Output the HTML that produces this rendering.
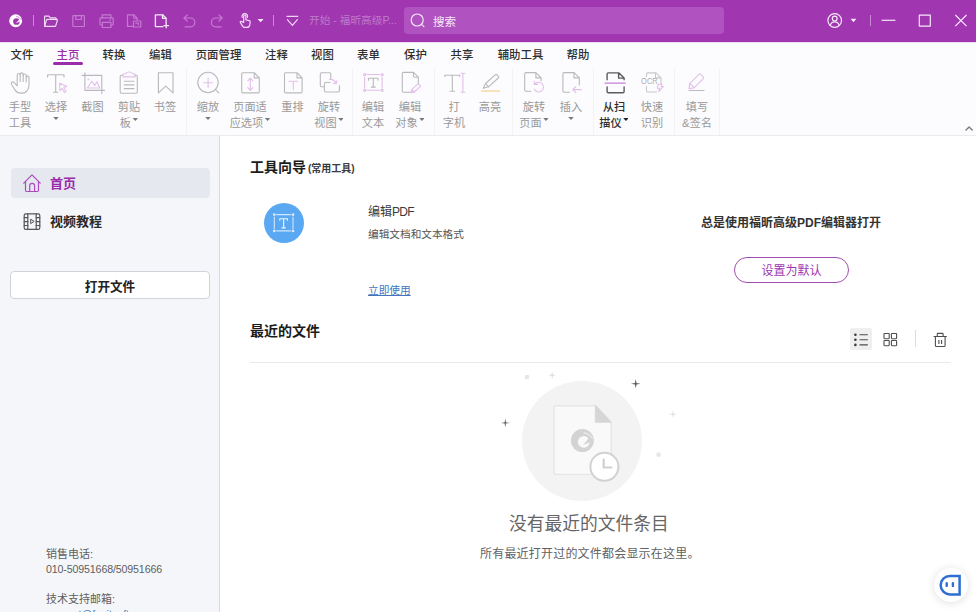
<!DOCTYPE html>
<html lang="zh-CN">
<head>
<meta charset="utf-8">
<title>开始 - 福昕高级PDF编辑器</title>
<style>
*{box-sizing:border-box;margin:0;padding:0}
html,body{width:976px;height:612px;overflow:hidden;background:#fff}
body{font-family:"Liberation Sans","Noto Sans CJK SC",sans-serif;font-size:12px;color:#333;position:relative}
.abs{position:absolute}
svg{position:absolute;overflow:visible}
/* title bar */
#titlebar{position:absolute;left:0;top:0;width:976px;height:42px;background:#a136b1}
#titlebar .sep{position:absolute;top:15px;width:1px;height:11px;background:#c98ad4}
#doctitle{position:absolute;left:309px;top:12px;font-size:10.67px;line-height:16px;color:#bd7bc9;white-space:nowrap}
#search{position:absolute;left:404px;top:7px;width:320px;height:27px;background:#b053c0;border-radius:4px}
#search span{position:absolute;left:29px;top:6.5px;font-size:11.5px;line-height:17px;color:#f7e8f9}
/* menu */
#ribbon{position:absolute;left:0;top:42px;width:976px;height:94px;background:#fcfcfe;border-bottom:1px solid #ebebee;box-shadow:inset 0 1px 0 #efdaf3}
.tab{position:absolute;top:4px;height:18px;line-height:18px;font-size:11.4px;font-weight:500;color:#2e2e2e;transform:translateX(-50%);white-space:nowrap}
.tab.on{color:#9a2cab}
#tabline{position:absolute;left:53px;top:20px;width:30px;height:3px;border-radius:2px;background:#9a2cab}
.tool{position:absolute;top:57px;transform:translateX(-50%);text-align:center;font-size:11.2px;line-height:16px;color:#999;white-space:nowrap}
.tool.act{color:#2e2e2e;font-weight:500}
.tool.act i{background:#222}
.tool i{display:inline-block;width:5.6px;height:3px;background:#787878;clip-path:polygon(0 0,100% 0,50% 100%);vertical-align:baseline;position:relative;top:-6px;margin-left:1.500px;line-height:0}
.tool b{display:block;width:5.6px;height:3px;background:#787878;clip-path:polygon(0 0,100% 0,50% 100%);margin:2px auto 0}
.rsep{position:absolute;top:26px;width:1px;height:67px;background:#f3f3f6}
/* sidebar */
#side{position:absolute;left:0;top:136px;width:220px;height:476px;background:#f5f6fa;border-right:1px solid #d9dbea}
#navhome{position:absolute;left:11px;top:32px;width:199px;height:30px;border-radius:4px;background:#e6e8f0}
.navtxt{position:absolute;left:50px;font-size:13px;font-weight:700;line-height:20px;white-space:nowrap}
#openbtn{position:absolute;left:10px;top:135px;width:200px;height:28px;border:1px solid #d2d3da;border-radius:4px;background:#fff;text-align:center;font-size:12.6px;font-weight:700;line-height:30px;color:#222}
.sinfo{position:absolute;left:46px;font-size:11px;line-height:15px;color:#5e5e5e;white-space:nowrap}
/* content */
#main{position:absolute;left:220px;top:136px;width:756px;height:476px;background:#fff}
h2{position:absolute;font-size:14px;font-weight:700;line-height:20px;color:#1c1c1c;white-space:nowrap}
h2 small{font-size:10px;font-weight:700;color:#3a3a3a}

#bluec{position:absolute;left:44px;top:67px;width:40px;height:40px;border-radius:50%;background:#5ba8f2}
.t12{position:absolute;font-size:12px;line-height:18px;white-space:nowrap}
.t10{position:absolute;font-size:10.67px;line-height:16px;white-space:nowrap}
#setbtn{position:absolute;left:514px;top:121px;width:115px;height:26px;border:1px solid #a24db3;border-radius:13px;text-align:center;font-size:12px;line-height:26px;color:#9e38b0}
#hr{position:absolute;left:30px;top:226px;width:701px;height:1px;background:#e9e9e9}
#listbg{position:absolute;left:630px;top:192px;width:22px;height:22px;background:#efefef;border-radius:2px}
#vsep{position:absolute;left:695px;top:194px;width:1px;height:17px;background:#dcdcdc}
#bigc{position:absolute;left:302px;top:245px;width:120px;height:120px;border-radius:50%;background:#f3f3f3}
#et{position:absolute;left:219px;top:375px;width:300px;text-align:center;font-size:17.75px;line-height:26px;color:#666;white-space:nowrap}
#es{position:absolute;left:260px;top:409px;font-size:12px;line-height:18px;color:#626262;white-space:nowrap;letter-spacing:.2px}
#chat{position:absolute;left:714px;top:432px;width:34px;height:34px;border-radius:50%;background:#fff;box-shadow:0 1px 8px rgba(0,0,0,.13)}
</style>
</head>
<body>
<div id="titlebar">

  <svg style="left:0;top:0;z-index:2" width="976" height="42" viewBox="0 0 976 42" fill="none" stroke-linecap="round" stroke-linejoin="round">
    <!-- logo -->
    <g fill="#fff" stroke="none" transform="translate(8.900 14) scale(.565)"><path fill-rule="evenodd" d="M12 .5a11.500 11.500 0 1 0 0 23a11.500 11.500 0 1 0 0-23zM13.400 7.400a5.900 5.900 0 1 1 0 11.800a5.900 5.900 0 1 1 0-11.800z"/><path d="M18.400 8.400q-1.700 4.900-6.200 7.400q5.400-.3 7.800-2.800z"/><path d="M13.600 4.200q5.600 .8 8.400 5.600" fill="none" stroke="#a136b1" stroke-width=".9"/></g>
    <!-- folder -->
    <g stroke="#f1dcf5" stroke-width="1.2">
      <path d="M44.600 26.400V16.800c0-.4.300-.7.700-.7h3.600l1.500 1.700h5c.4 0 .7.300.7.700v1.300"/>
      <path d="M44.600 26.400l2-6.600c.1-.3.400-.5.700-.5h9.400c.5 0 .8.400.7.900l-1.700 5.700c-.1.300-.4.500-.7.500z"/>
    </g>
    <!-- save (dim) -->
    <g stroke="#c57ad2" stroke-width="1.200">
      <rect x="72.800" y="15.700" width="11.600" height="10.800" rx=".8"/>
      <path d="M75.800 15.900v3.600h5.600v-3.600"/>
    </g>
    <!-- print (dim) -->
    <g stroke="#c57ad2" stroke-width="1.200">
      <path d="M102.300 17.800v-3h8.600v3"/>
      <path d="M102.300 25h-1.500c-.5 0-.8-.4-.8-.8v-5.500c0-.5.400-.8.800-.8h11.600c.5 0 .8.400.8.800v5.500c0 .5-.4.800-.8.800h-1.500"/>
      <rect x="102.300" y="22.300" width="8.600" height="5.200"/>
      <path d="M109.500 20h1.200"/>
    </g>
    <!-- doc copy (dim) -->
    <g stroke="#c57ad2" stroke-width="1.200">
      <path d="M132.500 26.400h-5v-11.600h6.500l3 3v2.400"/>
      <path d="M133.800 14.900v3.200h3.100"/>
      <rect x="133.500" y="21" width="7.200" height="6"/>
      <path d="M135.800 23.200h2.600v1.600"/>
    </g>
    <!-- new doc (bright) -->
    <g stroke="#f6e9f9" stroke-width="1.300">
      <path d="M163 26.600h-7.600v-11.800h7.300l3.400 3.400v4.600"/>
      <path d="M162.500 15v3.400h3.400"/>
      <path d="M166.200 23.400v4.400M164 25.600h4.500"/>
    </g>
    <!-- undo (dim) -->
    <g stroke="#c57ad2" stroke-width="1.200">
      <path d="M184.200 18h6.200a4.400 4.400 0 0 1 0 8.800h-5.400"/>
      <path d="M187.300 14.800l-3.200 3.200l3.200 3.200"/>
    </g>
    <!-- redo (dim) -->
    <g stroke="#c57ad2" stroke-width="1.200">
      <path d="M222 18h-6.200a4.400 4.400 0 0 0 0 8.800h5.400"/>
      <path d="M218.900 14.800l3.200 3.200l-3.200 3.200"/>
    </g>
    <!-- hand touch -->
    <g stroke="#f1dcf5" stroke-width="1.200">
      <path d="M243.700 22.500v-6.300c0-.7.500-1.200 1.100-1.200s1.100.5 1.100 1.200v3.600l3.300.8c.7.200 1.100.8 1 1.500l-.5 3c-.2 1.300-1.300 2.300-2.700 2.300h-2.100c-.9 0-1.800-.5-2.300-1.300l-2.200-3.400c-.3-.5-.1-1.100.4-1.300c.4-.2.800-.1 1.100.2z"/>
      <path d="M242.200 17.400a2.800 2.800 0 1 1 5.200 0"/>
    </g>
    <path d="M257.600 19h6l-3 3.300z" fill="#f6e9f9"/>
    <!-- quick access chevron -->
    <g stroke="#efd3f3" stroke-width="1.200">
      <path d="M287 16.400h10.800"/>
      <path d="M287.400 19.600l5 5.800l5-5.800"/>
    </g>
    <!-- search icon -->
    <g stroke="#f7e6fa" stroke-width="1.200">
      <circle cx="417.200" cy="20" r="6"/>
      <path d="M421.600 24.400l2.300 2.300"/>
    </g>
    <!-- user -->
    <g stroke="#f6e9f9" stroke-width="1.200">
      <circle cx="834.700" cy="20.500" r="6.800"/>
      <circle cx="834.700" cy="18.600" r="2.400"/>
      <path d="M830.300 25.300c.5-2.200 2.300-3.500 4.400-3.500s3.900 1.300 4.400 3.500"/>
    </g>
    <path d="M850.600 18.800h5.800l-2.900 3.400z" fill="#f6e9f9"/>
    <!-- window buttons -->
    <g stroke="#f6e9f9" stroke-width="1.200" stroke-linecap="butt">
      <path d="M881.600 20.300h13.800"/>
      <rect x="919.300" y="15.100" width="11" height="11"/>
      <path d="M955.300 15l11.200 11.200M966.500 15l-11.200 11.200"/>
    </g>
  </svg>
  <div class="sep" style="left:33px"></div>
  <div class="sep" style="left:273px"></div>
  <div class="sep" style="left:870px"></div>
  <div id="doctitle">开始 - 福昕高级P...</div>
  <div id="search"><span>搜索</span></div>
</div>
<div id="ribbon">

  <svg style="left:0;top:0" width="976" height="93" viewBox="0 42 976 93" fill="none" stroke-linecap="round" stroke-linejoin="round" stroke-width="1.1">
    <g stroke="#b9b9bd">
      <!-- hand -->
      <path d="M17.200 82.500v-7.400c0-.9.700-1.600 1.500-1.600s1.500.7 1.500 1.600v-.6c0-.9.700-1.600 1.500-1.600s1.500.7 1.500 1.600v1.100c0-.9.700-1.600 1.500-1.600s1.500.7 1.500 1.600v2c0-.8.600-1.500 1.400-1.500s1.400.7 1.400 1.500v7.500c0 4.500-2.800 8-7 8h-1.300c-2.400 0-4.300-1-5.600-3l-3.600-5.600c-.5-.8-.3-1.800.5-2.300c.7-.4 1.600-.3 2.200.4l3 3.300z"/>
      <path d="M20.200 75v6.500M23.200 75.500v6M26.200 77.500v4.500"/>
      <!-- T select -->
      <path d="M47.600 77v-2.200h16.400v2.200M55.700 74.800v17.400M53.500 92.300h4.400"/>
      <!-- snapshot -->
      <path d="M84.900 72.800v17.600h19.600M82.200 75.400h19.600v18"/>
      <!-- clipboard -->
      <path d="M123 75.200h-1.600c-.7 0-1.200.5-1.200 1.200v15.600c0 .7.500 1.200 1.200 1.200h14.700c.7 0 1.200-.5 1.200-1.200v-15.600c0-.7-.5-1.200-1.200-1.200h-1.600"/>
      <path d="M124.200 81.200h9.800M124.200 84.900h9.800M124.200 88.600h9.800"/>
      <!-- bookmark -->
      <path d="M158.400 72.700h14.600v20.200l-7.300-6.800l-7.300 6.800z"/>
      <!-- zoom -->
      <circle cx="208" cy="82.500" r="10.200"/>
      <path d="M215.400 89.600l3.500 3.300"/>
      <!-- page fit doc -->
      <path d="M254.200 72.700h-11.400c-.6 0-1.100.5-1.100 1.100v18c0 .6.500 1.100 1.100 1.100h15.400c.6 0 1.100-.5 1.100-1.100v-13.900zM254.200 72.700v5.200h5.100"/>
      <!-- reflow doc -->
      <path d="M297 72.700h-11.400c-.6 0-1.100.5-1.100 1.100v18c0 .6.500 1.100 1.100 1.100h15.400c.6 0 1.100-.5 1.100-1.100v-13.900zM297 72.700v5.200h5.100"/>
      <!-- rotate view -->
      <path d="M323.500 86.800h-2c-.7 0-1.200-.5-1.200-1.200v-11.700c0-.7.500-1.200 1.200-1.200h8.100c.7 0 1.200.5 1.200 1.200v4.600"/>
      <path d="M330 82.500h-4.400c-.7 0-1.200.5-1.200 1.200v7.100c0 .7.500 1.200 1.200 1.200h12.600c.7 0 1.200-.5 1.200-1.200v-5.300"/>
      <!-- edit text T -->
      <path d="M368.600 80.200v-2h9.400v2M373.300 78.200v8.800M371.300 87.100h4"/>
      <!-- edit object doc -->
      <path d="M414 92.300h-10.500c-.7 0-1.200-.5-1.200-1.200v-17.500c0-.7.500-1.200 1.200-1.200h10l4.800 4.800v6.500M413.400 72.500v3.600c0 .7.500 1.200 1.200 1.200h3.600"/>
      <!-- typewriter T -->
      <path d="M444.800 76.400v-1.100h15v1.100M452.300 75.300v16M450 91.300h4.600"/>
      <!-- highlighter -->
      <path d="M483.200 88.300l2.400-4.800l9.800-8.800c.5-.4 1.200-.4 1.600.1l1.400 1.600c.4.500.4 1.200-.1 1.600l-9.800 8.800z"/>
      <path d="M485.600 83.500l2.900 3.300"/>
      <!-- rotate page doc -->
      <path d="M531 91.300h-5.100c-.7 0-1.200-.5-1.200-1.200v-16.300c0-.7.500-1.200 1.200-1.200h10l5.200 5.200v3M535.900 72.700v5.200h5.200"/>
      <!-- insert doc -->
      <path d="M569.500 92.300h-5.400c-.7 0-1.200-.5-1.200-1.200v-17.300c0-.7.500-1.200 1.200-1.200h10l5.200 5.200v7.200M574 72.700v5.200h5.200"/>
      <!-- OCR doc -->
      <path d="M646.500 76.500v-2.400c0-.7.500-1.200 1.200-1.200h8.300l5 5v6.500M655.500 73v4.900h5.300M646.500 86.500v4.300c0 .7.500 1.200 1.200 1.200h8.800" stroke="#c8c8cc"/>
      <!-- fill sign underline -->
      <path d="M689 90.500h15"/>
    </g>
    <g stroke="#e2bfe9">
      <!-- select cursor -->
      <path d="M59.600 83.200l7.200 3.400l-3 1l2.200 4l-1.600.9l-2.200-4l-2.300 2.100z"/>
      <!-- snapshot mountains -->
      <path d="M87.400 88l4.300-6.800l3 4.200l2.300-3.600l2.800 6.200z"/>
      <circle cx="88.400" cy="79.400" r=".4"/>
      <!-- clipboard clip -->
      <path d="M123 76.900v-2.200c0-.6.400-1 1-1h1.700c.3-1 1.600-1.700 3.400-1.700s3.100.7 3.400 1.700h1.700c.6 0 1 .4 1 1v2.200z"/>
      <!-- zoom plus -->
      <path d="M203.500 82.700h9.200M208.100 78.100v9.300"/>
      <!-- page fit arrow -->
      <path d="M250.300 78.300v12M247.700 81l2.600-2.800l2.600 2.800M247.700 87.600l2.600 2.800l2.600-2.800"/>
      <!-- reflow T -->
      <path d="M289.100 81.300h8.500M293.300 81.300v8.500"/>
      <!-- rotate view arrow -->
      <path d="M329.600 79.400c3.300-.2 5.600 1.300 6.600 4.200M333.300 83.300l2.900.4l.6-2.900"/>
      <!-- edit text frame -->
      <path d="M367 74.500h12.600M367 90.200h12.600M364.600 77v10.700M382.100 77v10.700"/>
      <rect x="363.800" y="73.700" width="1.700" height="1.700"/><rect x="381.300" y="73.700" width="1.700" height="1.700"/>
      <rect x="363.800" y="89.400" width="1.700" height="1.700"/><rect x="381.300" y="89.400" width="1.700" height="1.700"/>
      <!-- edit object pencil -->
      <path d="M411 92.800l.9-3.400l6.400-5.800l2.400 2.600l-6.400 5.800zM412 89.500l2.300 2.500"/>
      <!-- typewriter cursor -->
      <path d="M462.900 73.300v19M461 73.300h3.800M461 92.300h3.800"/>
      <!-- rotate page arrow -->
      <path d="M534.800 84.200a4.800 4.800 0 1 1-.6 4.800M534.300 81.200v3.200h3.200"/>
      <!-- insert arrow -->
      <path d="M581.300 89.600h-8.400M575.800 86.600l-3 3l3 3"/>
      <!-- scan line -->
      <path d="M605 83.100h20.200" stroke="#c77fd6" stroke-width="1.300"/>
      <!-- OCR lightning -->
      <path d="M658.200 84.300h3.800l-1 2.300h2.300l-4.600 5l.9-3.400h-2.200z"/>
      <!-- fill sign pen -->
      <path d="M689 88.600l.7-5l9.300-9.300c.5-.5 1.200-.5 1.700 0l2.600 2.600c.5.500.5 1.200 0 1.700l-9.300 9.300zM689.900 83.400l4.300 4.300"/>
    </g>
    <!-- highlight underline -->
    <path d="M481.700 91h17.800" stroke="#f6d9a6" stroke-width="1.400"/>
    <!-- scanner doc dark -->
    <g stroke="#5a5a5e" stroke-width="1.400">
      <path d="M607.100 79.800v-5.700c0-.7.500-1.200 1.200-1.200h10.700l5.100 5.100v1.800M618.600 73v5.100h5.400M607.100 87v4.500c0 .7.500 1.200 1.200 1.200h14.600c.7 0 1.200-.5 1.200-1.200v-4.500"/>
    </g>
    <text x="641" y="84.400" font-family="Liberation Sans, sans-serif" font-size="8.200" fill="#adadb1" stroke="none" textLength="16.800" lengthAdjust="spacingAndGlyphs">OCR</text>
    <!-- collapse chevron -->
    <path d="M966 130l3.100-3.100l3.100 3.100" stroke="#7c7c80" stroke-width="1.400"/>
  </svg>
  <div class="tab" style="left:22px">文件</div>
  <div class="tab on" style="left:68px">主页</div>
  <div class="tab" style="left:114px">转换</div>
  <div class="tab" style="left:160.5px">编辑</div>
  <div class="tab" style="left:218.5px">页面管理</div>
  <div class="tab" style="left:276.5px">注释</div>
  <div class="tab" style="left:322.5px">视图</div>
  <div class="tab" style="left:368.5px">表单</div>
  <div class="tab" style="left:415.5px">保护</div>
  <div class="tab" style="left:462px">共享</div>
  <div class="tab" style="left:520.5px">辅助工具</div>
  <div class="tab" style="left:578px">帮助</div>
  <div id="tabline"></div>

  <div class="tool" style="left:20px">手型<br>工具</div>
  <div class="tool" style="left:56px">选择<b></b></div>
  <div class="tool" style="left:92.5px">截图</div>
  <div class="tool" style="left:129px">剪贴<br>板<i></i></div>
  <div class="tool" style="left:165px">书签</div>
  <div class="rsep" style="left:186px"></div>
  <div class="tool" style="left:208px">缩放<b></b></div>
  <div class="tool" style="left:250px">页面适<br>应选项<i></i></div>
  <div class="tool" style="left:292.5px">重排</div>
  <div class="tool" style="left:329px">旋转<br>视图<i></i></div>
  <div class="rsep" style="left:352px"></div>
  <div class="tool" style="left:373px">编辑<br>文本</div>
  <div class="tool" style="left:410px">编辑<br>对象<i></i></div>
  <div class="rsep" style="left:434px"></div>
  <div class="tool" style="left:454px">打<br>字机</div>
  <div class="tool" style="left:490px">高亮</div>
  <div class="rsep" style="left:512px"></div>
  <div class="tool" style="left:534px">旋转<br>页面<i></i></div>
  <div class="tool" style="left:571px">插入<b></b></div>
  <div class="rsep" style="left:593px"></div>
  <div class="tool act" style="left:614px">从扫<br>描仪<i></i></div>
  <div class="tool" style="left:652px">快速<br>识别</div>
  <div class="rsep" style="left:674px"></div>
  <div class="tool" style="left:697px">填写<br>&amp;签名</div>
  <div class="rsep" style="left:719px"></div>
</div>
<div id="side">
  <div id="navhome"></div>

  <svg style="left:0;top:0" width="220" height="476" viewBox="0 136 220 476" fill="none" stroke-linecap="round" stroke-linejoin="round" stroke-width="1.2">
    <g stroke="#ae49bf">
      <path d="M23.800 183.200l8.200-8.300l8.200 8.300"/>
      <path d="M25.500 181.700v8.600c0 .7.500 1.200 1.200 1.200h10.600c.7 0 1.200-.5 1.200-1.200v-8.600"/>
      <path d="M29.700 191.400v-5.600a2.450 2.450 0 0 1 4.900 0v5.600"/>
    </g>
    <g stroke="#555558">
      <rect x="24.200" y="213.800" width="15.600" height="15.600" rx="1.600"/>
      <path d="M27.800 213.800v15.600M36.200 213.800v15.600"/>
      <path d="M24.200 217.700h3.600M24.200 221.600h3.600M24.200 225.500h3.600M36.200 217.700h3.600M36.200 221.600h3.600M36.200 225.500h3.600"/>
      <path d="M30.700 219.600v4l3.100-2z" stroke-width="1"/>
    </g>
  </svg>
  <div class="navtxt" style="top:38px;color:#9a2cab">首页</div>
  <div class="navtxt" style="top:76px;color:#2a2a2a">视频教程</div>
  <div id="openbtn">打开文件</div>
  <div class="sinfo" style="top:411px">销售电话:</div>
  <div class="sinfo" style="top:426px;font-size:10.67px;letter-spacing:-.15px">010-50951668/50951666</div>
  <div class="sinfo" style="top:456px">技术支持邮箱:</div>
  <div class="sinfo" style="top:471px;font-size:10.67px;color:#4a7fc4">support@foxitsoftware.cn</div>
</div>
<div id="main">
  <h2 style="left:30px;top:21px">工具向导<small style="margin-left:2px">(常用工具)</small></h2>
  <h2 style="left:30px;top:185px">最近的文件</h2>

  <div id="bluec"></div>
  <div class="t12" style="left:148px;top:67px;color:#3a3a3a">编辑<span style="letter-spacing:-.7px">PDF</span></div>
  <div class="t10" style="left:148px;top:90px;color:#555">编辑文档和文本格式</div>
  <div class="t10" style="left:148px;top:146px;color:#4275be;text-decoration:underline">立即使用</div>
  <div class="t12" style="left:481px;top:78px;color:#333;font-weight:700">总是使用福昕高级PDF编辑器打开</div>
  <div id="setbtn">设置为默认</div>
  <div id="listbg"></div>
  <div id="vsep"></div>
  <div id="hr"></div>
  <div id="bigc"></div>
  <div id="et">没有最近的文件条目</div>
  <div id="es">所有最近打开过的文件都会显示在这里。</div>
  <div id="chat"></div>

  <svg style="left:0;top:0" width="756" height="476" viewBox="220 136 756 476" fill="none" stroke-linecap="round" stroke-linejoin="round">
    <!-- blue circle icon -->
    <g stroke="#fff" stroke-width="1.100" opacity=".92">
      <path d="M276.800 214.600h13.700M276.800 230.900h13.700M274.300 217v11.500M293 217v11.500" stroke="#dcecfd"/>
      <g fill="#e6f1fe" stroke="none">
        <rect x="273.100" y="213.400" width="2.400" height="2.400"/><rect x="291.800" y="213.400" width="2.400" height="2.400"/>
        <rect x="273.100" y="229.700" width="2.400" height="2.400"/><rect x="291.800" y="229.700" width="2.400" height="2.400"/>
      </g>
      <path d="M279.800 220.300v-1.600h7.700v1.600M283.650 218.700v9.200M282 227.900h3.300"/>
    </g>
    <!-- list icon -->
    <g fill="#3a3a3a" stroke="none">
      <circle cx="855.400" cy="334.800" r="1.300"/><circle cx="855.400" cy="339.800" r="1.300"/><circle cx="855.400" cy="344.900" r="1.300"/>
    </g>
    <g stroke="#4e4e4e" stroke-width="1.100" stroke-linecap="butt">
      <path d="M859.500 334.800h8.300M859.500 339.800h8.300M859.500 344.900h8.300"/>
      <!-- grid -->
      <rect x="884" y="333.500" width="5.200" height="5.200" rx=".6"/><rect x="891.400" y="333.500" width="5.200" height="5.200" rx=".6"/>
      <rect x="884" y="340.500" width="5.200" height="5.200" rx=".6"/><rect x="891.400" y="340.500" width="5.200" height="5.200" rx=".6"/>
      <!-- trash -->
      <path d="M933.600 336.500h13.200M937.300 336.300v-2.200c0-.4.300-.7.700-.7h4.400c.4 0 .7.300.7.700v2.200"/>
      <path d="M935.400 336.600v8.800c0 .6.500 1.100 1.100 1.100h7.500c.6 0 1.100-.5 1.100-1.100v-8.800"/>
      <path d="M938.900 340v4M941.600 340v4"/>
    </g>
    <!-- empty illustration -->
    <path d="M556 405.700h39.700l15.500 16.500v50.200a2 2 0 0 1-2 2h-53.200a2 2 0 0 1-2-2v-64.700a2 2 0 0 1 2-2z" fill="#f9f9f9" stroke="#e6e6e6" stroke-width="1.400"/>
    <path d="M595.700 405.700l15.500 16.500h-15.500z" fill="#d6d6d6" stroke="#d6d6d6" stroke-width="1"/>
    <!-- foxit logo -->
    <g fill="#d3d3d3" stroke="none" transform="translate(570.400 428.600)"><path fill-rule="evenodd" d="M12 .5a11.500 11.500 0 1 0 0 23a11.500 11.500 0 1 0 0-23zM13.400 7.400a5.900 5.900 0 1 1 0 11.800a5.900 5.900 0 1 1 0-11.800z"/><path d="M18.400 8.400q-1.700 4.900-6.200 7.400q5.400-.3 7.800-2.800z"/><path d="M13.600 4.200q5.600 .8 8.400 5.600" fill="none" stroke="#f9f9f9" stroke-width=".9"/></g>
    <circle cx="604.400" cy="466.800" r="14" fill="#fff" stroke="#d2d2d2" stroke-width="2"/>
    <path d="M603.700 458.800v8.700h8.600" stroke="#d0d0d0" stroke-width="2.200" stroke-linecap="butt" stroke-linejoin="miter"/>
    <!-- sparkles -->
    <g stroke="none">
      <rect x="525" y="375" width="4.200" height="4.200" rx="1" fill="#e6e6e6"/>
      <rect x="656.500" y="452.600" width="4.200" height="4.200" rx="1.400" fill="#e6e6e6"/>
      <path d="M552.200 371.500l.7 3.100l3.100.7l-3.100.7l-.7 3.100l-.7-3.100l-3.100-.7l3.100-.7z" fill="#dedede"/>
      <path d="M673 410l.7 3.500l3.500.7l-3.500.7l-.7 3.500l-.7-3.500l-3.500-.7l3.500-.7z" fill="#e2e2e2"/>
      <path d="M635.700 379l.8 4l4 .8l-4 .8l-.8 4l-.8-4l-4-.8l4-.8z" fill="#606060"/>
      <path d="M505.300 418.600l.7 3.600l3.600.7l-3.600.7l-.7 3.600l-.7-3.600l-3.600-.7l3.600-.7z" fill="#6a6a6a"/>
    </g>
    <!-- chat icon -->
    <g stroke="#2f6fd3" stroke-width="2.500" stroke-linejoin="miter" stroke-linecap="butt">
      <path d="M959.600 575.900h-9.700a9.250 9.250 0 0 0 0 18.500h9.700z"/>
      <path d="M946.700 583.300v2.600M952.900 583.300v2.600" stroke-linecap="round" stroke-width="2.400"/>
    </g>
  </svg>
</div>
</body>
</html>
